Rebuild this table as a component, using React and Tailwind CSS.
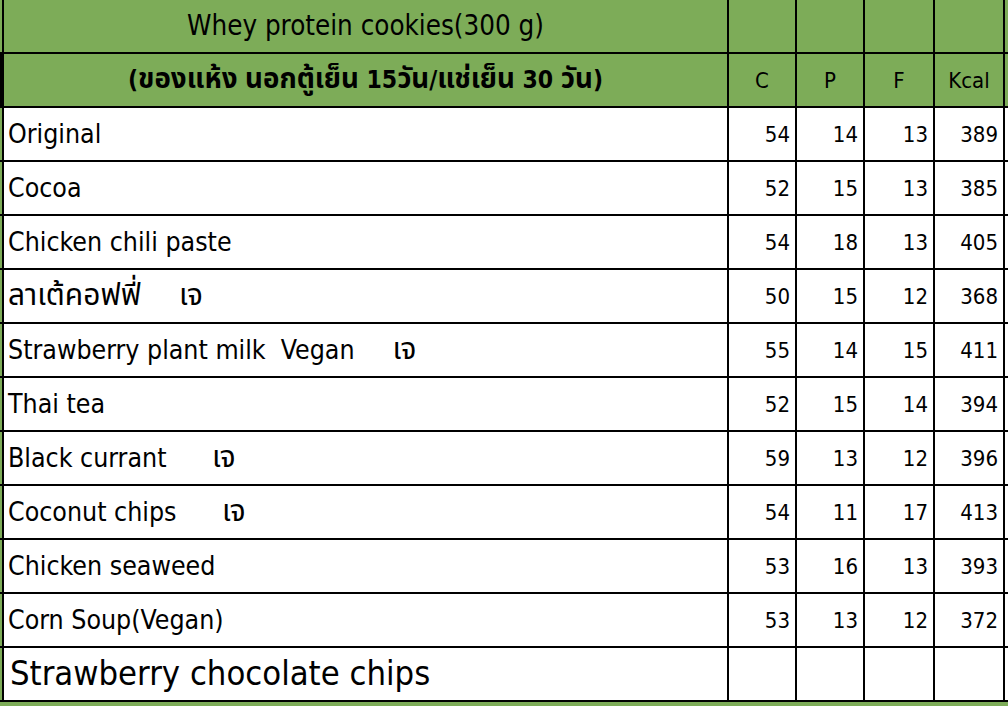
import React from 'react';

const rows = [
    { name: 'Original', c: 54, p: 14, f: 13, kcal: 389 },
    { name: 'Cocoa', c: 52, p: 15, f: 13, kcal: 385 },
    { name: 'Chicken chili paste', c: 54, p: 18, f: 13, kcal: 405 },
    { name: 'ลาเต้คอฟฟี่     เจ', c: 50, p: 15, f: 12, kcal: 368 },
    { name: 'Strawberry plant milk  Vegan     เจ', c: 55, p: 14, f: 15, kcal: 411 },
    { name: 'Thai tea', c: 52, p: 15, f: 14, kcal: 394 },
    { name: 'Black currant      เจ', c: 59, p: 13, f: 12, kcal: 396 },
    { name: 'Coconut chips      เจ', c: 54, p: 11, f: 17, kcal: 413 },
    { name: 'Chicken seaweed', c: 53, p: 16, f: 13, kcal: 393 },
    { name: 'Corn Soup(Vegan)', c: 53, p: 13, f: 12, kcal: 372 },
];

const font = { fontFamily: '"DejaVu Sans Condensed", "DejaVu Sans", "Noto Sans Thai", "Noto Sans Thai UI", sans-serif' };

// Thai glyphs from the fallback font come out small, bump them up a bit
function Mixed({ text }) {
    return (
        <span className="whitespace-pre">
            {text.split(/([\u0E00-\u0E7F]+)/).map((part, i) =>
                /[\u0E00-\u0E7F]/.test(part)
                    ? <span key={i} className="text-[1.13em] leading-none">{part}</span>
                    : <React.Fragment key={i}>{part}</React.Fragment>
            )}
        </span>
    );
}

function NumCell({ value }) {
    return (
        <div className="bg-white flex items-center justify-end pr-[5px] text-[22px] text-black">
            {value}
        </div>
    );
}

export default function App() {
    return (
        <div className="w-[1008px] h-[706px] overflow-hidden bg-white" style={font}>
            <div className="grid grid-cols-[2px_723px_66px_66px_68px_68px_3px] auto-rows-[52px] gap-[2px] bg-black">
                {/* Title row */}
                <div className="bg-[#7dac58]" />
                <div className="bg-[#7dac58] flex items-center justify-center text-[27.5px] text-black">
                    Whey protein cookies(300 g)
                </div>
                <div className="bg-[#7dac58]" />
                <div className="bg-[#7dac58]" />
                <div className="bg-[#7dac58]" />
                <div className="bg-[#7dac58]" />
                <div className="bg-[#7dac58]" />

                {/* Column header row */}
                <div className="bg-black" />
                <div className="bg-[#7dac58] flex items-center justify-center text-[24.5px] font-bold text-black">
                    <Mixed text="(ของแห้ง นอกตู้เย็น 15วัน/แช่เย็น 30 วัน)" />
                </div>
                <div className="bg-[#7dac58] flex items-center justify-center text-[22px] text-black">C</div>
                <div className="bg-[#7dac58] flex items-center justify-center text-[22px] text-black">P</div>
                <div className="bg-[#7dac58] flex items-center justify-center text-[22px] text-black">F</div>
                <div className="bg-[#7dac58] flex items-center justify-center text-[22px] text-black">Kcal</div>
                <div className="bg-[#7dac58]" />

                {rows.map((r) => (
                    <React.Fragment key={r.name}>
                        <div className="bg-[#7dac58]" />
                        <div className="bg-white flex items-center pl-[4px] text-[26.5px] text-black">
                            <Mixed text={r.name} />
                        </div>
                        <NumCell value={r.c} />
                        <NumCell value={r.p} />
                        <NumCell value={r.f} />
                        <NumCell value={r.kcal} />
                        <div className="bg-white" />
                    </React.Fragment>
                ))}

                {/* Last item, larger font, no values */}
                <div className="bg-[#7dac58]" />
                <div className="bg-white flex items-center pl-[6px] text-[34.3px] text-black whitespace-pre">
                    Strawberry chocolate chips
                </div>
                <div className="bg-white" />
                <div className="bg-white" />
                <div className="bg-white" />
                <div className="bg-white" />
                <div className="bg-white" />

                {/* Bottom strip */}
                <div className="bg-[#7dac58] col-span-7 h-[4px]" />
            </div>
        </div>
    );
}
